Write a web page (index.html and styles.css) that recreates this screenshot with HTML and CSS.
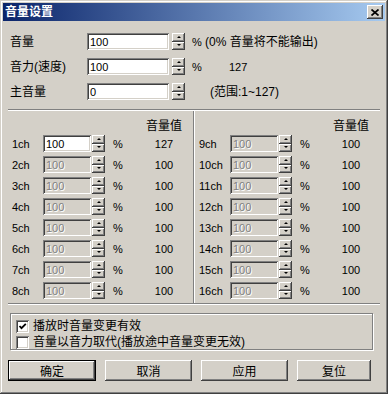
FILE: index.html
```html
<!DOCTYPE html>
<html>
  <head>
    <meta charset="utf-8">
    <title>音量设置</title>
    <link rel="stylesheet" href="styles.css">
  </head>
<body>
  <div class="window">

    <div class="titlebar">
      <span class="title">音量设置</span>
      <button class="closebtn">
        <svg width="8" height="7" viewBox="0 0 8 7"><path d="M0.5 0.5 L7.5 6.5 M7.5 0.5 L0.5 6.5" stroke="#000" stroke-width="1.7" fill="none"/></svg>
      </button>
    </div>

    <div class="content">

      <div class="toprow">
        <span class="toplabel">音量</span>
        <input class="field topfield" value="100">
        <div class="spin"><i class="up"></i><i class="down"></i></div>
        <span class="num pct-top">%</span>
        <span class="note">(0% 音量将不能输出)</span>
      </div>
      <div class="toprow">
        <span class="toplabel">音力(速度)</span>
        <input class="field topfield" value="100">
        <div class="spin"><i class="up"></i><i class="down"></i></div>
        <span class="num pct-top">%</span>
        <span class="num velo">127</span>
      </div>
      <div class="toprow">
        <span class="toplabel">主音量</span>
        <input class="field topfield" value="0">
        <div class="spin"><i class="up"></i><i class="down"></i></div>
        <span class="pct-top"></span>
        <span class="note range">(范围:1~127)</span>
      </div>

      <div class="sep"></div>

      <div class="channels">
        <div class="chcol" id="leftcol">
          <div class="chhead"><span class="val">音量值</span></div>
        </div>
        <div class="vsep"></div>
        <div class="chcol" id="rightcol">
          <div class="chhead"><span class="val">音量值</span></div>
        </div>
      </div>

      <div class="sep"></div>

      <div class="checkgroup">
        <div class="checkrow">
          <span class="checkbox">
            <svg width="9" height="9" viewBox="0 0 9 9"><path d="M1.5 4 L3.5 6.2 L7.8 1.8" stroke="#000" stroke-width="1.8" fill="none"/></svg>
          </span>
          <span>播放时音量变更有效</span>
        </div>
        <div class="checkrow">
          <span class="checkbox"></span>
          <span>音量以音力取代(播放途中音量变更无效)</span>
        </div>
      </div>

      <div class="buttons">
        <button class="btn default">确定</button>
        <button class="btn">取消</button>
        <button class="btn">应用</button>
        <button class="btn last">复位</button>
      </div>

    </div>
  </div>

  <script>
    // 16 channels, only 1ch is enabled
    var vals = [127,100,100,100,100,100,100,100,100,100,100,100,100,100,100,100]
    for (var i = 0; i < 16; i++) {
      var col = document.getElementById(i < 8 ? "leftcol" : "rightcol")
      var row = document.createElement("div")
      row.className = "chrow"
      row.innerHTML =
        '<span class="num chlabel">' + (i + 1) + 'ch</span>' +
        '<input class="field chfield' + (i == 0 ? '' : ' off') + '" value="100"' + (i == 0 ? '' : ' disabled') + '>' +
        '<div class="spin"><i class="up"></i><i class="down"></i></div>' +
        '<span class="num pct">%</span>' +
        '<span class="num val">' + vals[i] + '</span>'
      col.appendChild(row)
    }
  </script>
</body>
</html>
```

FILE: styles.css
```css
body, html {margin: 0; padding: 0; background-color: #d4d0c8;}

body {
  font-family: "Liberation Sans", "Noto Sans CJK SC", sans-serif;
  font-size: 12px;
  color: #000;
}

.window {
  width: 388px;
  height: 394px;
  box-sizing: border-box;
  padding: 3px;
  background-color: #d4d0c8;
  box-shadow: inset -1px -1px #404040, inset 1px 1px #d4d0c8, inset -2px -2px #808080, inset 2px 2px #fff;
  display: flex;
  flex-direction: column;
}

.titlebar {
  height: 18px;
  display: flex;
  align-items: center;
  justify-content: space-between;
  padding: 0 2px;
  background: linear-gradient(to right, #0a246a, #a6caf0);
}

.title {
  color: white;
  font-weight: bold;
  font-size: 12px;
  line-height: 14px;
}

.closebtn {
  width: 16px;
  height: 14px;
  padding: 0;
  border: none;
  background-color: #d4d0c8;
  box-shadow: inset -1px -1px #404040, inset 1px 1px #fff, inset -2px -2px #808080;
  display: flex;
  align-items: center;
  justify-content: center;
}

.content {
  flex: 1;
  padding-top: 12px;
  display: flex;
  flex-direction: column;
}

.num {
  font-size: 11px;
}

.field {
  box-sizing: border-box;
  border: none;
  outline: none;
  margin: 0;
  padding: 0 0 0 3px;
  height: 17px;
  font-family: "Liberation Sans", sans-serif;
  font-size: 11px;
  color: #000;
  background-color: #fff;
  box-shadow: inset 1px 1px #808080, inset -1px -1px #fff, inset 2px 2px #404040, inset -2px -2px #d4d0c8;
}

.field.off {
  background-color: #d4d0c8;
  color: #808080;
  -webkit-text-fill-color: #808080;
  text-shadow: 1px 1px #fff;
  opacity: 1;
}

.spin {
  width: 13px;
  height: 17px;
  display: flex;
  flex-direction: column;
}

.spin i {
  flex: 1;
  display: flex;
  align-items: center;
  justify-content: center;
  background-color: #d4d0c8;
  box-shadow: inset -1px -1px #404040, inset 1px 1px #fff, inset -2px -2px #808080;
}

.spin i::after {
  content: "";
  width: 0;
  height: 0;
  border-left: 2px solid transparent;
  border-right: 2px solid transparent;
}

.spin .up::after {
  border-bottom: 2px solid #000;
  margin-top: -1px;
}

.spin .down::after {
  border-top: 2px solid #000;
  margin-top: -1px;
}

/* top three rows */
.toprow {
  display: flex;
  align-items: center;
  height: 17px;
  margin-bottom: 8px;
  padding-left: 7px;
}

.toprow:nth-child(3) {
  margin-bottom: 0;
}

.toplabel {
  width: 77px;
  line-height: 14px;
}

.topfield {
  width: 82px;
}

.toprow .spin {
  margin-left: 3px;
}

.pct-top {
  margin-left: 7px;
  width: 13px;
}

.note {
  line-height: 14px;
}

.velo {
  margin-left: 24px;
}

.range {
  margin-left: 5px;
}

.sep {
  height: 0;
  margin: 9px 5px 0 5px;
  border-top: 1px solid #808080;
  border-bottom: 1px solid #fff;
}

/* channel columns */
.channels {
  display: flex;
  margin: 0 5px;
  height: 192px;
}

.chcol {
  width: 185px;
  box-sizing: border-box;
  padding-left: 4px;
}

.vsep {
  width: 0;
  border-left: 1px solid #808080;
  border-right: 1px solid #fff;
}

.chhead {
  height: 24px;
  box-sizing: border-box;
  padding-top: 8px;
  padding-left: 123px;
  line-height: 14px;
  display: flex;
}

.chrow {
  display: flex;
  align-items: center;
  height: 17px;
  margin-bottom: 4px;
}

.chlabel {
  width: 31px;
}

.chfield {
  width: 48px;
}

.chrow .spin {
  margin-left: 1px;
}

.pct {
  margin-left: 8px;
  width: 22px;
}

.val {
  width: 58px;
  text-align: center;
  display: inline-block;
}

/* check boxes */
.channels + .sep {
  margin-top: 0;
}

.checkgroup {
  margin: 8px 0 0 7px;
  width: 363px;
  height: 37px;
  box-sizing: border-box;
  padding: 4px 0 0 5px;
  border: 1px solid #808080;
  box-shadow: inset 1px 1px #fff, 1px 1px #fff;
}

.checkrow {
  display: flex;
  align-items: center;
  height: 16px;
  line-height: 14px;
}

.checkbox {
  width: 13px;
  height: 13px;
  box-sizing: border-box;
  margin-right: 4px;
  background-color: #fff;
  box-shadow: inset 1px 1px #808080, inset -1px -1px #fff, inset 2px 2px #404040, inset -2px -2px #d4d0c8;
  display: flex;
  align-items: center;
  justify-content: center;
}

/* bottom buttons */
.buttons {
  display: flex;
  margin: 10px 0 0 5px;
}

.btn {
  width: 87px;
  height: 21px;
  margin: 0 9px 0 0;
  padding: 0;
  border: none;
  font-family: "Liberation Sans", "Noto Sans CJK SC", sans-serif;
  font-size: 12px;
  color: #000;
  background-color: #d4d0c8;
  box-shadow: inset -1px -1px #404040, inset 1px 1px #fff, inset -2px -2px #808080;
}

.btn.default {
  width: 88px;
  margin-right: 9px;
  box-shadow: inset 0 0 0 1px #000, inset -2px -2px #404040, inset 2px 2px #fff, inset -3px -3px #808080;
}

.btn.last {
  width: 74px;
  margin-left: 0px;
}
```
